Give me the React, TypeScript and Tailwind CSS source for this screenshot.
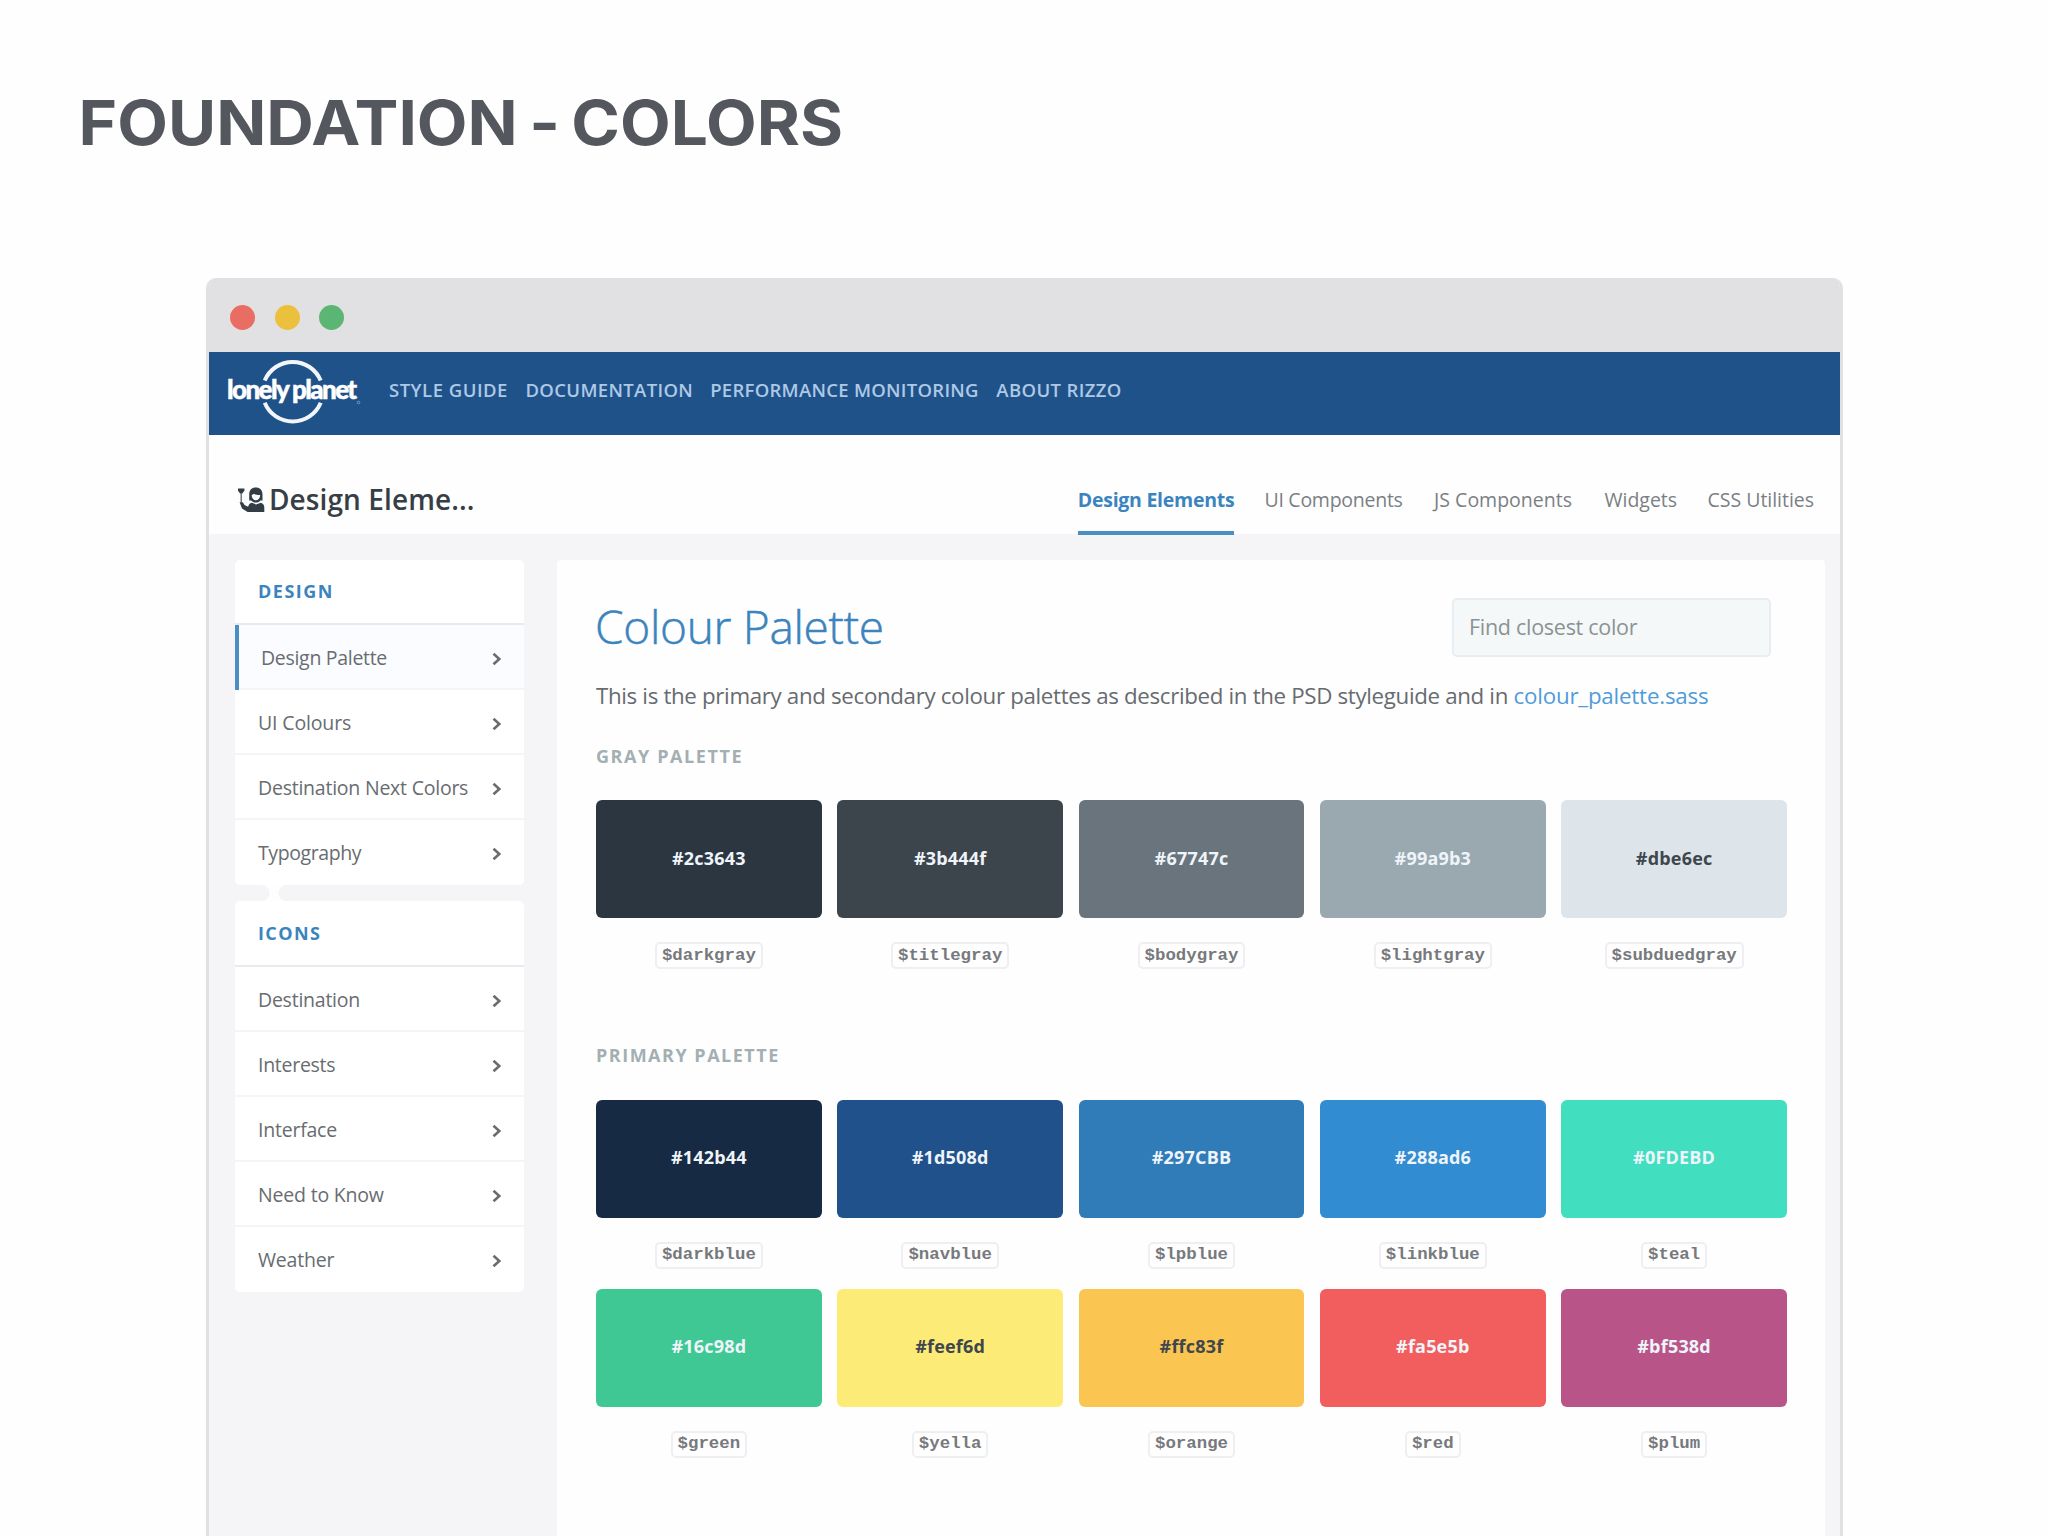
type Swatch = { hex: string; name: string; bg: string; dark?: boolean };

const grays: Swatch[] = [
  { hex: '#2c3643', name: '$darkgray', bg: 'bg-[#2c3640]' },
  { hex: '#3b444f', name: '$titlegray', bg: 'bg-[#3c444c]' },
  { hex: '#67747c', name: '$bodygray', bg: 'bg-[#69747c]' },
  { hex: '#99a9b3', name: '$lightgray', bg: 'bg-[#9aa9b0]' },
  { hex: '#dbe6ec', name: '$subduedgray', bg: 'bg-[#dde5ea]', dark: true },
];

const primaries: Swatch[] = [
  { hex: '#142b44', name: '$darkblue', bg: 'bg-[#162b43]' },
  { hex: '#1d508d', name: '$navblue', bg: 'bg-[#20518a]' },
  { hex: '#297CBB', name: '$lpblue', bg: 'bg-[#307cb8]' },
  { hex: '#288ad6', name: '$linkblue', bg: 'bg-[#328cd1]' },
  { hex: '#0FDEBD', name: '$teal', bg: 'bg-[#41dfc0]' },
  { hex: '#16c98d', name: '$green', bg: 'bg-[#3fc893]' },
  { hex: '#feef6d', name: '$yella', bg: 'bg-[#fcec77]', dark: true },
  { hex: '#ffc83f', name: '$orange', bg: 'bg-[#fac550]', dark: true },
  { hex: '#fa5e5b', name: '$red', bg: 'bg-[#f25e5e]' },
  { hex: '#bf538d', name: '$plum', bg: 'bg-[#b85488]' },
];

function Logo() {
  return (
    <svg className="h-[70px] w-[136px] shrink-0" viewBox="0 0 136 70" fill="none">
      <path d="M38.7 24.6A30.3 30.3 0 0 1 94.7 24.6M38.7 46.8A30.3 30.3 0 0 0 94.7 46.8" stroke="#f2f6fb" strokeWidth="4" />
      <text x="1" y="43" fill="#fff" stroke="#fff" strokeWidth="0.5" className="font-['Lato'] text-[26px] font-black tracking-[-1.6px]">
        lonely planet
      </text>
      <circle cx="132.5" cy="46.5" r="1.3" stroke="#8fb0d6" strokeWidth="0.7" />
    </svg>
  );
}

function DesignerIcon() {
  return (
    <svg className="h-[26px] w-[27px] shrink-0" viewBox="0 0 27 26" fill="#333d46">
      <path d="M0 1.5h6.4v2.2L4.3 6.6H2.1L0 3.7z" />
      <path d="M3.2 6v9.5" stroke="#5a636b" strokeWidth="1.3" fill="none" />
      <path d="M1.6 15.2h3.2l1.7 2.9 3.6 1.6c.6-2.3 1.8-3.5 3.5-3.900l4.500 1.600 4.700-1.600c2.400.7 3.500 2.200 3.500 4.600V25H9.600L4 21.600z" />
      <path
        fillRule="evenodd"
        d="M11.200 13.500V7.200c0-4 2.600-6.700 6.500-6.700 4.200 0 6.800 2.700 6.800 6.700v6.300h-2c-1 1.300-2.600 2.100-4.600 2.100s-3.700-.8-4.700-2.100zM13.600 8c.2 3.200 1.900 5.300 4.300 5.300s4.100-2.100 4.300-5.300c-2.700 0-5.200-.4-6.400-1.200-.4.700-1.200 1.100-2.200 1.200z"
      />
    </svg>
  );
}

function Chevron() {
  return (
    <svg className="mt-[3px] h-[14px] w-[10px] shrink-0" viewBox="0 0 10 14" fill="none" stroke="#686d71" strokeWidth="2.6">
      <path d="M1.500 1.700 7.300 7l-5.800 5.300" />
    </svg>
  );
}

function NavCard({ title, items, titleTracking }: { title: string; items: [string, string][]; titleTracking: string }) {
  return (
    <div className="overflow-hidden rounded-[5px] bg-white">
      <div className={`flex h-[65.5px] items-center border-b-2 border-[#e8eaee] pl-[23px] text-[18px] font-bold text-[#3b84bd] ${titleTracking}`}>
        {title}
      </div>
      {items.map(([label, tracking], i) => {
        const selected = label === 'Design Palette';
        return (
          <div
            key={label}
            className={`flex h-[65.1px] items-center justify-between pr-[22px] text-[19.5px] text-[#686c70] ${
              selected ? 'border-l-4 border-[#4a8ec4] bg-[#fafcff] pl-[22px]' : 'pl-[23px]'
            } ${i < items.length - 1 ? 'shadow-[inset_0_-2px_0_#f5f5f8]' : ''}`}
          >
            <span className={tracking}>{label}</span>
            <Chevron />
          </div>
        );
      })}
    </div>
  );
}

function SwatchGrid({ swatches }: { swatches: Swatch[] }) {
  return (
    <div className="grid w-[1191px] grid-cols-5 gap-x-[15.6px] gap-y-[20px]">
      {swatches.map((s) => (
        <div key={s.hex} className="flex flex-col items-center">
          <div
            className={`flex h-[118px] w-full items-center justify-center rounded-[6px] pb-[2px] text-[18px] font-bold tracking-[0.2px] ${s.bg} ${
              s.dark ? 'text-[#3f464d]' : 'text-[#eef4fa]'
            }`}
          >
            {s.hex}
          </div>
          <code className="mt-[24px] flex h-[27px] items-center rounded-[5px] border-2 border-[#efeff3] px-[5px] pt-[1px] font-['Liberation_Mono'] text-[17.4px] font-bold text-[#77797d]">
            {s.name}
          </code>
        </div>
      ))}
    </div>
  );
}

export default function App() {
  return (
    <div className="h-[1536px] w-[2048px] overflow-hidden bg-[#fefefe] font-['Open_Sans',sans-serif]">
      <h1 className="h-[278px] origin-left scale-x-[1.062] pt-[83px] pl-[74px] font-['Inter'] text-[62px] leading-[80px] font-bold [word-spacing:-4px] text-[#54575d]">
        FOUNDATION <span className="relative top-[4px]">-</span> COLORS
      </h1>
      <div className="mx-auto mr-[205px] ml-[206px] flex h-[1270px] flex-col overflow-hidden rounded-t-[10px] border-x-[3px] border-[#e1e1e4] bg-[#f5f5f8]">
        <div className="flex h-[74px] shrink-0 items-center gap-[19.5px] bg-[#e1e1e3] pt-[4px] pl-[21px]">
          <i className="size-[25px] rounded-full bg-[#ea6d63]" />
          <i className="size-[25px] rounded-full bg-[#ebc03c]" />
          <i className="size-[25px] rounded-full bg-[#5bb673]" />
        </div>
        <nav className="flex h-[82.500px] shrink-0 items-center bg-[#20528a] pb-[4px] pl-[17px] text-[18.5px] font-semibold text-[#adc9e6]">
          <Logo />
          <div className="flex pb-[2px]">
            <span className="ml-[27px] tracking-[0.5px]">STYLE GUIDE</span>
            <span className="ml-[17.500px] tracking-[0.34px]">DOCUMENTATION</span>
            <span className="ml-[17px] tracking-[0.28px]">PERFORMANCE MONITORING</span>
            <span className="ml-[17.500px] tracking-[0.38px]">ABOUT RIZZO</span>
          </div>
        </nav>
        <header className="flex h-[99.5px] shrink-0 items-end justify-between bg-[#fefefe] pr-[26px] pl-[29px]">
          <div className="flex h-[68px] items-center gap-[4px] text-[28px] font-semibold text-[#373e45]">
            <DesignerIcon />
            <span className="pb-[2px] tracking-[0.1px]">Design Eleme...</span>
          </div>
          <div className="flex h-[68px] text-[19.5px] text-[#7b7f83]">
            <span className="relative z-10 flex h-[69px] items-center border-b-[4px] border-[#4b8fc2] pt-[3px] font-bold tracking-[-0.26px] text-[#3a84bf]">
              Design Elements
            </span>
            <span className="ml-[30px] flex items-center tracking-[-0.26px]">UI Components</span>
            <span className="ml-[31.5px] flex items-center tracking-[0px]">JS Components</span>
            <span className="ml-[32.500px] flex items-center tracking-[0px]">Widgets</span>
            <span className="ml-[30.500px] flex items-center tracking-[-0.03px]">CSS Utilities</span>
          </div>
        </header>
        <div className="flex flex-1 pt-[25.5px] pl-[26px]">
          <aside className="w-[289px] shrink-0">
            <NavCard
              title="DESIGN"
              titleTracking="tracking-[1.5px]"
              items={[
                ['Design Palette', 'tracking-[-0.3px]'],
                ['UI Colours', 'tracking-[-0.15px]'],
                ['Destination Next Colors', 'tracking-[-0.23px]'],
                ['Typography', 'tracking-[-0.4px]'],
              ]}
            />
            <svg className="ml-[27px] block h-[16px] w-[24px]" viewBox="0 0 24 16" fill="#fefefe">
              <path d="M0 0c5 1 7.500 4 7.500 8S5 15 0 16h24c-5-1-7.500-4-7.500-8S19 1 24 0z" />
            </svg>
            <NavCard
              title="ICONS"
              titleTracking="tracking-[1.4px]"
              items={[
                ['Destination', 'tracking-[-0.24px]'],
                ['Interests', 'tracking-[-0.28px]'],
                ['Interface', 'tracking-[-0.23px]'],
                ['Need to Know', 'tracking-[-0.19px]'],
                ['Weather', 'tracking-[-0.2px]'],
              ]}
            />
          </aside>
          <main className="ml-[33px] w-[1268px] rounded-t-[4px] bg-[#fefefe] pt-[38px] pl-[39px]">
            <div className="flex h-[59px] items-center justify-between pr-[15px]">
              <h2 className="-ml-[1px] pb-[2px] text-[46px] leading-[57px] font-light tracking-[-0.3px] text-[#3b84bd] [-webkit-text-stroke:0.5px_#3b84bd]">
                Colour Palette
              </h2>
              <div className="mr-[39px] flex h-[59px] w-[319px] items-center rounded-[5px] border-2 border-[#e7edf0] bg-[#f4f8f9] pl-[15px] text-[21.500px] tracking-[-0.28px] text-[#8c9294]">
                Find closest color
              </div>
            </div>
            <p className="mt-[21px] text-[22.3px] leading-[36px] tracking-[-0.33px] whitespace-nowrap text-[#676b6f]">
              This is the primary and secondary colour palettes as described in the PSD styleguide and in{' '}
              <span className="tracking-[-0.18px] text-[#509bda]">colour_palette.sass</span>
            </p>
            <h3 className="mt-[30px] mb-[32.5px] text-[18px] leading-[24px] font-bold tracking-[1.58px] text-[#a3afb3]">GRAY PALETTE</h3>
            <SwatchGrid swatches={grays} />
            <h3 className="mt-[74px] mb-[32.5px] text-[18px] leading-[24px] font-bold tracking-[1.5px] text-[#a3afb3]">PRIMARY PALETTE</h3>
            <SwatchGrid swatches={primaries} />
          </main>
        </div>
      </div>
    </div>
  );
}
